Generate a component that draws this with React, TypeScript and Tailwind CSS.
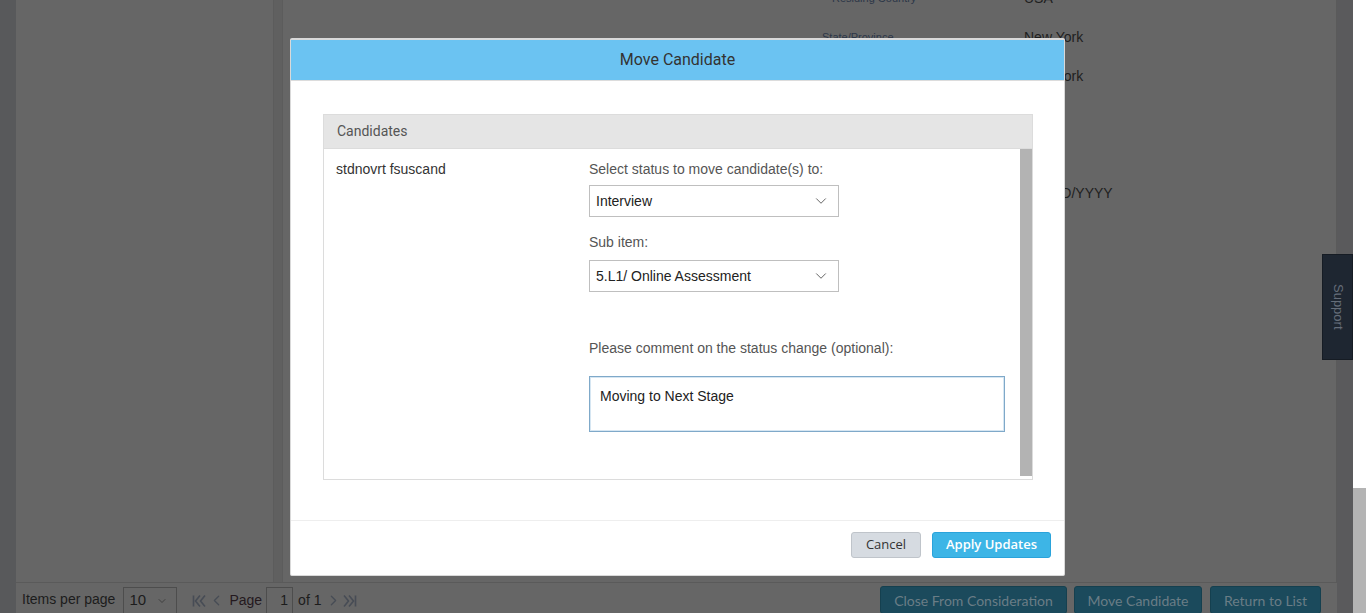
import { ChevronDown, ChevronLeft, ChevronRight } from 'lucide-react'

const rows = [
  { label: 'Residing Country', pad: 'pl-[549px]', value: 'USA' },
  { label: 'State/Province', pad: 'pl-[539px]', value: 'New York' },
  { label: 'City', pad: 'pl-[600px]', value: 'New York' },
  { label: '', pad: '', value: '' },
  { label: '', pad: '', value: '' },
  { label: 'Date of Birth', pad: 'pl-[560px]', value: 'MM/DD/YYYY' },
]

function SelectBox({ value }: { value: string }) {
  return (
    <div className="flex h-[32px] w-[250px] items-center justify-between border border-[#bfbfbf] bg-white pl-[6px] pr-[8px] text-[14px] text-[#222]">
      <span>{value}</span>
      <ChevronDown className="h-[18px] w-[18px] text-[#555]" strokeWidth={1.2} />
    </div>
  )
}

// bar + double chevron, flipped for "last"
function EdgeIcon({ last }: { last?: boolean }) {
  return (
    <svg width="15" height="16" viewBox="0 0 15 16" className={last ? 'rotate-180' : ''} fill="none" stroke="#474c55" strokeWidth="1.6">
      <path d="M1.5 2.5v11" />
      <path d="M8 2.5L3.5 8 8 13.5" />
      <path d="M13 2.5L8.5 8 13 13.5" />
    </svg>
  )
}

export default function App() {
  return (
    <div className="relative flex h-[613px] w-[1366px] overflow-hidden font-['Liberation_Sans',Arial,sans-serif]">
      {/* left page gutter */}
      <div className="w-[16px] bg-[#58595b]" />

      {/* dimmed page */}
      <div className="flex w-[1321px] flex-col">
        <div className="flex flex-1">
          <div className="w-[257px] bg-[#666666]" />
          <div className="w-[10px] border-x border-[#5c5c5c] bg-[#606060]" />
          <div className="flex-1 overflow-hidden border-r border-[#5a5a5a] bg-[#666666]">
            <div className="-mt-[21px] flex flex-col">
              {rows.map((r, i) => (
                <div key={i} className="flex h-[39px] items-center">
                  <div className={`w-[741px] ${r.pad} text-[11px] text-[#2c3648]`}>{r.label}</div>
                  <div className="text-[14px] text-[#1e1e1e]">{r.value}</div>
                </div>
              ))}
            </div>
          </div>
        </div>

        {/* pagination / actions bar */}
        <div className="flex h-[31px] items-start border-t border-[#5a5a5a] bg-[#666666] pl-[6px] pr-[16px] pt-[3px]">
          <div className="flex h-[27px] items-center text-[14px] text-[#1c1c1c]">
            <span>Items per page</span>
            <div className="ml-[8px] mt-[2px] flex h-[27px] w-[54px] items-center justify-between border border-[#4d4d4d] pl-[5px] pr-[8px] text-[15px]">
              <span>10</span>
              <ChevronDown className="h-[12px] w-[12px] text-[#333]" strokeWidth={1.5} />
            </div>
            <div className="ml-[15px] mt-[2px] flex items-center">
              <EdgeIcon />
              <ChevronLeft className="ml-[1px] h-[17px] w-[17px] text-[#474c55]" strokeWidth={1.8} />
            </div>
            <span className="ml-[4px] mt-[2px] text-[#24191e]">Page</span>
            <div className="ml-[4px] mt-[2px] flex h-[27px] w-[27px] items-center justify-end border border-[#4d4d4d] pr-[4px]">1</div>
            <span className="ml-[5px] mt-[2px]">of 1</span>
            <div className="ml-[4px] mt-[2px] flex items-center">
              <ChevronRight className="h-[17px] w-[17px] text-[#474c55]" strokeWidth={1.8} />
              <EdgeIcon last />
            </div>
          </div>
          <div className="ml-auto flex gap-[7px] font-['Lato',sans-serif] text-[14px] text-[#6a7d86]">
            <button className="h-[28px] w-[187px] rounded-[3px] border border-[#15404f] bg-[#1b4a5c]">Close From Consideration</button>
            <button className="h-[28px] w-[128px] rounded-[3px] border border-[#15404f] bg-[#1b4a5c]">Move Candidate</button>
            <button className="ml-[1px] h-[28px] w-[111px] rounded-[3px] border border-[#15404f] bg-[#1b4a5c]">Return to List</button>
          </div>
        </div>
      </div>

      {/* scrollbar gutter */}
      <div className="relative w-[16px] bg-[#5a5a5c]">
        <div className="absolute left-[-15px] top-[254px] flex h-[106px] w-[31px] items-center justify-center border border-[#161c24] bg-[#1e2631]">
          <span className="rotate-90 whitespace-nowrap text-[13px] text-[#656d79]">Support</span>
        </div>
      </div>
      <div className="flex w-[13px] flex-col">
        <div className="h-[488px] bg-white" />
        <div className="flex-1 bg-[#b4b4b4]" />
      </div>

      {/* modal */}
      <div className="absolute left-[290px] top-[38px] flex h-[538px] w-[775px] flex-col rounded-[2px] border border-t-2 border-[#d9d9d9] bg-white">
        <div className="flex h-[41px] items-center justify-center border-b border-[#dcdcdc] bg-[#6bc3f2] font-['Roboto',sans-serif] text-[16px] text-[#333]">
          Move Candidate
        </div>
        <div className="flex flex-1 flex-col pl-[32px] pr-[31px] pt-[33px]">
          <div className="flex h-[366px] flex-col border border-[#dcdcdc]">
            <div className="flex h-[34px] items-center border-b border-[#dcdcdc] bg-[#e5e5e5] pl-[13px] font-['Roboto',sans-serif] text-[14px] text-[#555]">
              Candidates
            </div>
            <div className="flex flex-1">
              <div className="flex flex-1 pt-[12px] text-[14px]">
                <div className="w-[265px] pl-[12px] leading-[16px] text-[#333]">stdnovrt fsuscand</div>
                <div className="flex flex-col">
                  <div className="leading-[16px] text-[#555]">Select status to move candidate(s) to:</div>
                  <div className="mt-[8px]">
                    <SelectBox value="Interview" />
                  </div>
                  <div className="mt-[17px] leading-[16px] text-[#555]">Sub item:</div>
                  <div className="mt-[10px]">
                    <SelectBox value="5.L1/ Online Assessment" />
                  </div>
                  <div className="mt-[48px] leading-[16px] text-[#555]">Please comment on the status change (optional):</div>
                  <div className="mt-[20px] h-[56px] w-[416px] border border-[#7fa9c9] pl-[10px] pt-[11px] text-[14px] leading-[16px] text-[#222] shadow-[inset_0_0_0_1px_#d6e6f2]">
                    Moving to Next Stage
                  </div>
                </div>
              </div>
              <div className="mb-[3px] w-[12px] bg-[#b3b3b3]" />
            </div>
          </div>
        </div>
        <div className="flex h-[55px] items-start justify-end gap-[11px] border-t border-[#eeeeee] pr-[13px] pt-[11px] font-['Open_Sans',sans-serif] text-[13px]">
          <button className="h-[26px] w-[70px] rounded-[3px] border border-[#bfc4ca] bg-[#d6dbe1] text-[#333]">Cancel</button>
          <button className="h-[26px] w-[119px] rounded-[3px] border border-[#2aa3db] bg-[#3db5e6] font-semibold text-white">Apply Updates</button>
        </div>
      </div>
    </div>
  )
}
